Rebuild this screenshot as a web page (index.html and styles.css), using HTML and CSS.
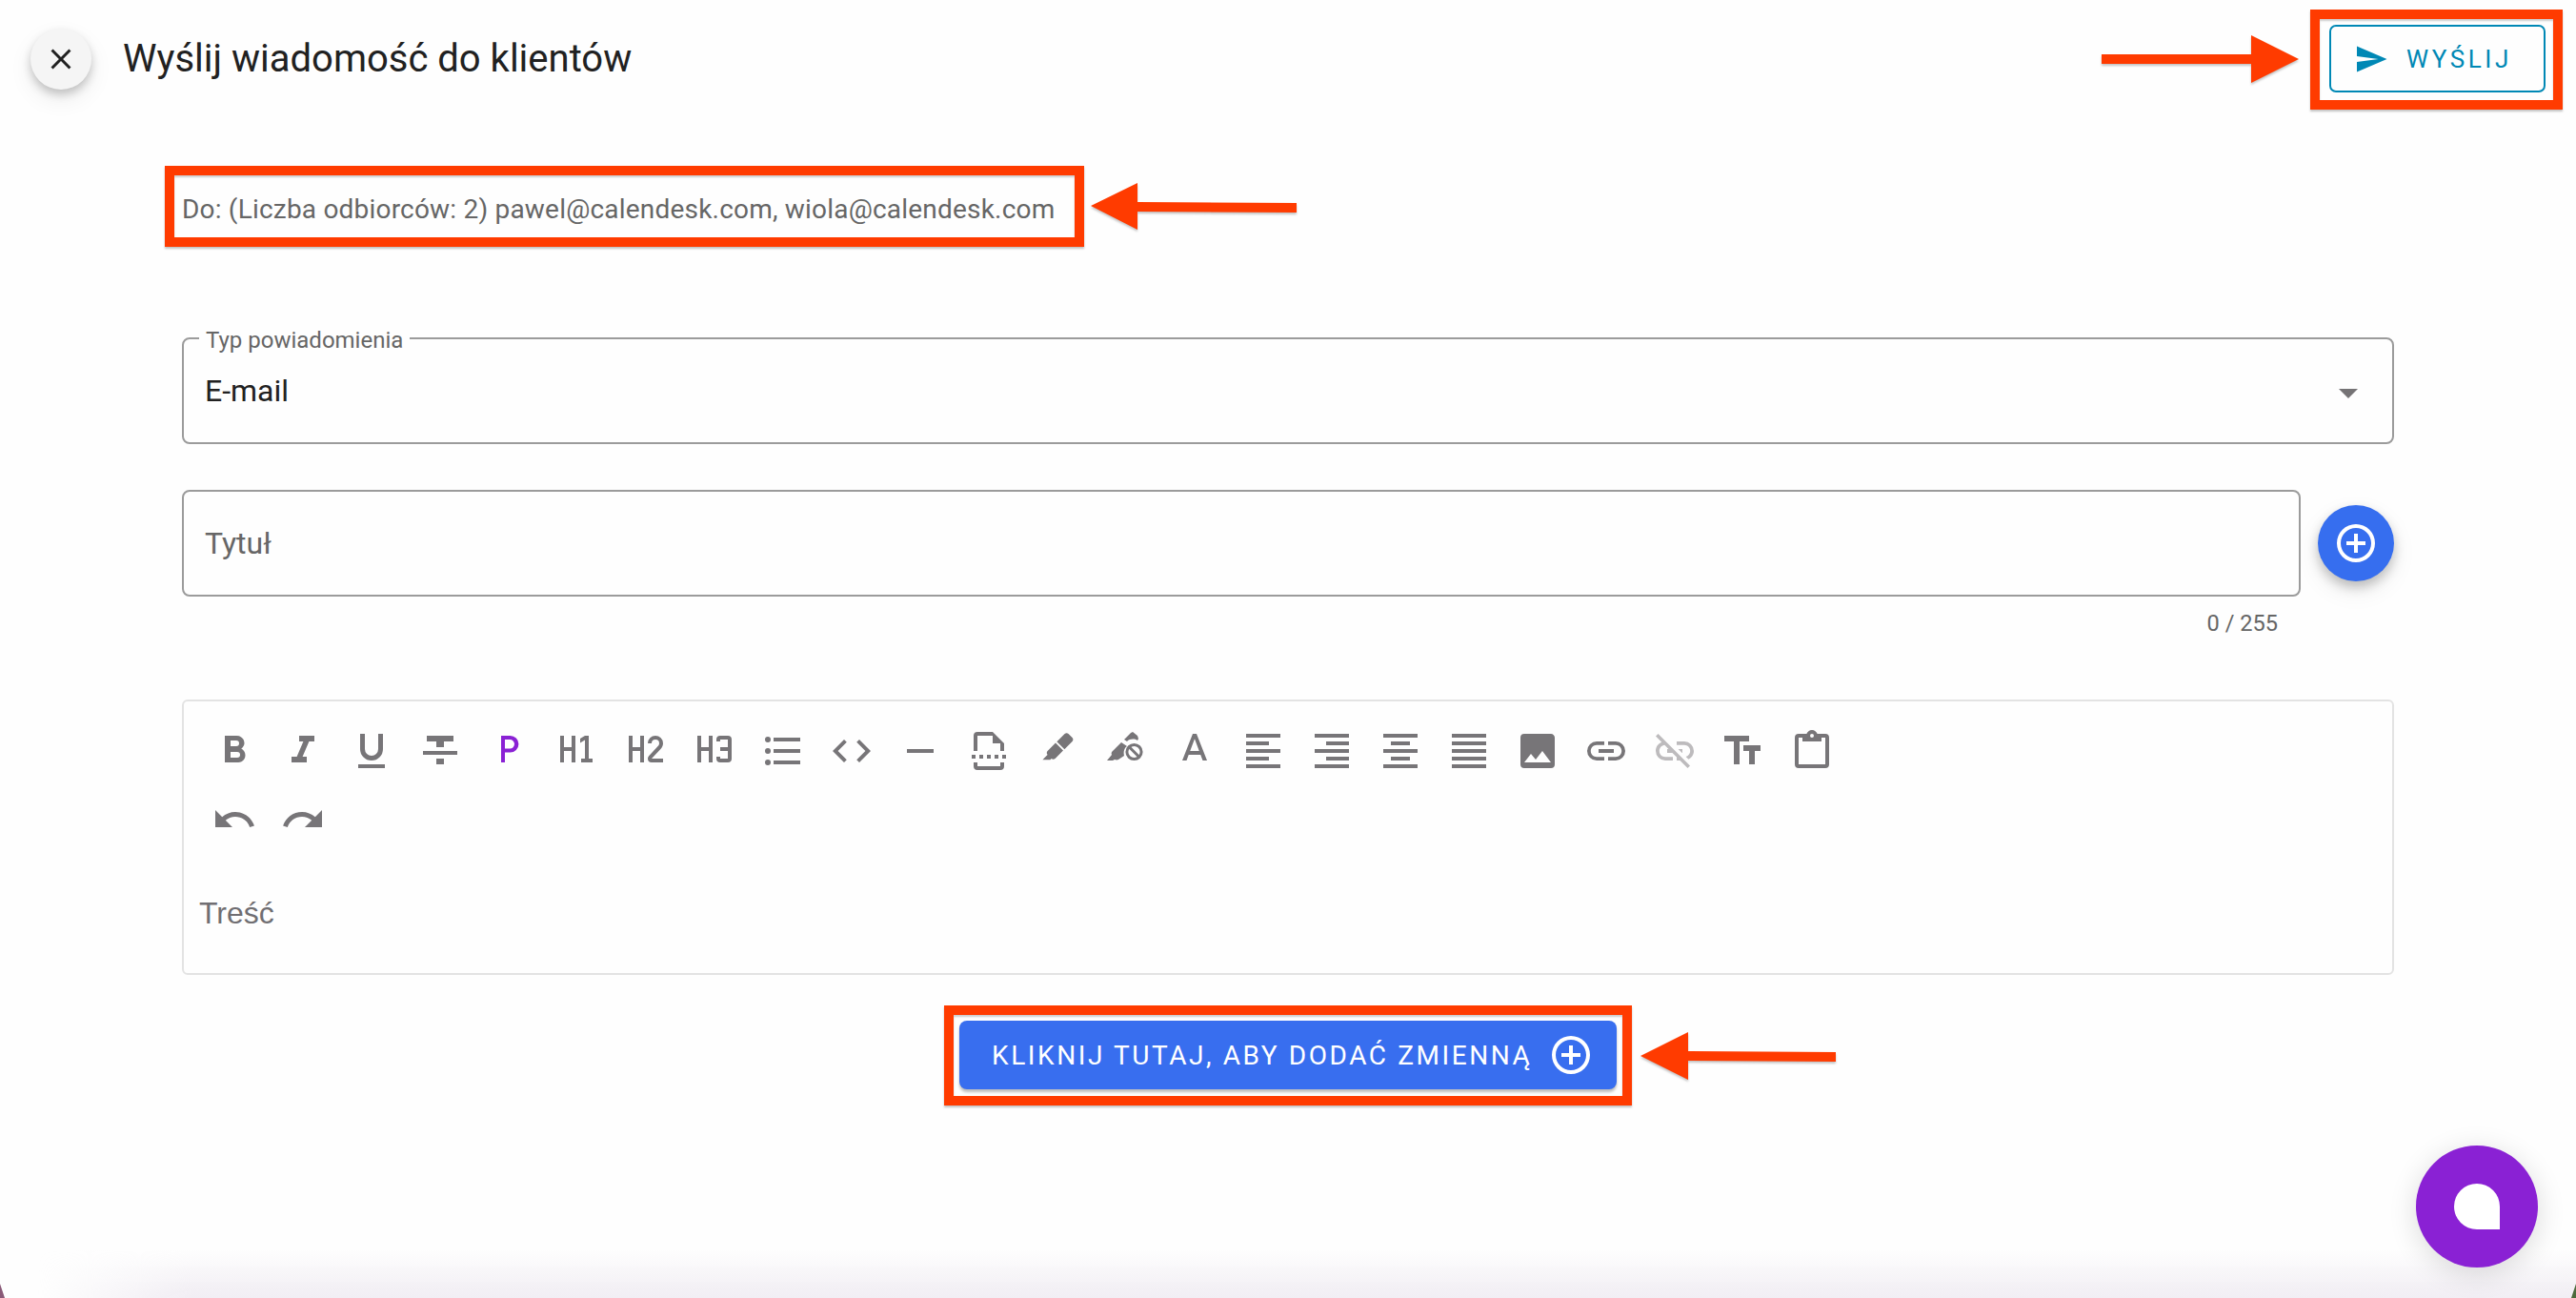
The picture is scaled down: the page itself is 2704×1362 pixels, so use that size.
FILE: index.html
```html
<!DOCTYPE html>
<html lang="pl">
<head>
<meta charset="utf-8">
<title>Wyślij wiadomość do klientów</title>
<link rel="stylesheet" href="styles.css">
</head>
<body>
<div class="page">
  <header class="topbar">
    <div class="topbar-left">
      <button class="close-btn" type="button"><svg class="ico-36" viewBox="0 0 24 24"><path d="M19,6.41L17.59,5L12,10.59L6.41,5L5,6.41L10.59,12L5,17.59L6.41,19L12,13.41L17.59,19L19,17.59L13.41,12L19,6.41Z"/></svg></button>
      <h1 class="title">Wyślij wiadomość do klientów</h1>
    </div>
    <div class="topbar-right">
      <svg class="arrow arrow-send" width="207" height="52" viewBox="0 0 207 52"><path d="M0 21H157V1L207 26L157 51V31H0Z"/></svg>
      <div class="hl hl-send">
        <button class="send-btn" type="button"><svg class="ico-36" viewBox="0 0 24 24"><path d="M2,21L23,12L2,3V10L17,12L2,14V21Z"/></svg><span>WYŚLIJ</span></button>
      </div>
    </div>
  </header>

  <main class="content">
    <div class="to-row">
      <div class="hl hl-to"><span class="to-text">Do: (Liczba odbiorców: 2) pawel@calendesk.com, wiola@calendesk.com</span></div>
      <svg class="arrow arrow-to" width="216" height="49" viewBox="0 0 216 49"><path d="M0 24L49 0V20L216 21V31L49 30V49Z"/></svg>
    </div>

    <div class="field field-select">
      <span class="field-label">Typ powiadomienia</span>
      <span class="field-value">E-mail</span>
      <span class="caret"></span>
    </div>

    <div class="title-row">
      <div class="title-col">
        <div class="field field-title"><span class="field-placeholder">Tytuł</span></div>
        <div class="counter">0 / 255</div>
      </div>
      <button class="fab-plus" type="button"><svg class="ico-48" viewBox="0 0 24 24"><path d="M12,20C7.59,20 4,16.41 4,12C4,7.59 7.59,4 12,4C16.41,4 20,7.59 20,12C20,16.41 16.41,20 12,20M12,2A10,10 0 0,0 2,12A10,10 0 0,0 12,22A10,10 0 0,0 22,12A10,10 0 0,0 12,2M13,7H11V11H7V13H11V17H13V13H17V11H13V7Z"/></svg></button>
    </div>

    <section class="editor">
      <div class="toolbar">
        <span class="tool"><svg viewBox="0 0 24 24"><path d="M13.5,15.5H10V12.5H13.5A1.5,1.5 0 0,1 15,14A1.5,1.5 0 0,1 13.5,15.5M10,6.5H13A1.5,1.5 0 0,1 14.5,8A1.5,1.5 0 0,1 13,9.5H10M15.6,10.79C16.57,10.11 17.25,9 17.25,8C17.25,5.74 15.5,4 13.25,4H7V18H14.04C16.14,18 17.75,16.3 17.75,14.21C17.75,12.69 16.89,11.39 15.6,10.79Z"/></svg></span>
        <span class="tool"><svg viewBox="0 0 24 24"><path d="M10,4V7H12.21L8.79,15H6V18H14V15H11.79L15.21,7H18V4H10Z"/></svg></span>
        <span class="tool"><svg viewBox="0 0 24 24"><path d="M5,21H19V19H5V21M12,17A6,6 0 0,0 18,11V3H15.5V11A3.5,3.5 0 0,1 12,14.5A3.5,3.5 0 0,1 8.5,11V3H6V11A6,6 0 0,0 12,17Z"/></svg></span>
        <span class="tool"><svg viewBox="0 0 24 24"><path d="M3,14H21V12H3M5,4V7H10V10H14V7H19V4M10,19H14V16H10V19Z"/></svg></span>
        <span class="tool tool-active"><svg viewBox="0 0 24 24"><path fill-rule="evenodd" d="M8,4H12.8A4.4,4.4 0 0,1 12.8,12.8H10V18H8ZM10,6V10.8H12.6A2.4,2.4 0 0,0 12.6,6Z"/></svg></span>
        <span class="tool"><svg viewBox="0 0 24 24"><path d="M3,4H5V10H9V4H11V18H9V12H5V18H3V4M14,18V16H16V6.31L13.5,7.75V5.44L16,4H18V16H20V18H14Z"/></svg></span>
        <span class="tool"><svg viewBox="0 0 24 24"><path d="M3,4H5V10H9V4H11V18H9V12H5V18H3V4M21,18H15A2,2 0 0,1 13,16C13,15.47 13.2,15 13.54,14.64L18.41,9.41C18.78,9.05 19,8.55 19,8A2,2 0 0,0 17,6A2,2 0 0,0 15,8H13A4,4 0 0,1 17,4A4,4 0 0,1 21,8C21,9.1 20.55,10.1 19.83,10.83L15,16H21V18Z"/></svg></span>
        <span class="tool"><svg viewBox="0 0 24 24"><path d="M3,4H5V10H9V4H11V18H9V12H5V18H3V4M15,4H19A2,2 0 0,1 21,6V16A2,2 0 0,1 19,18H15A2,2 0 0,1 13,16V15H15V16H19V12H15V10H19V6H15V7H13V6A2,2 0 0,1 15,4Z"/></svg></span>
        <span class="tool"><svg viewBox="0 0 24 24"><path d="M7,5H21V7H7V5M7,13V11H21V13H7M4,4.5A1.5,1.5 0 0,1 5.5,6A1.5,1.5 0 0,1 4,7.5A1.5,1.5 0 0,1 2.5,6A1.5,1.5 0 0,1 4,4.5M4,10.5A1.5,1.5 0 0,1 5.5,12A1.5,1.5 0 0,1 4,13.5A1.5,1.5 0 0,1 2.5,12A1.5,1.5 0 0,1 4,10.5M7,19V17H21V19H7M4,16.5A1.5,1.5 0 0,1 5.5,18A1.5,1.5 0 0,1 4,19.5A1.5,1.5 0 0,1 2.5,18A1.5,1.5 0 0,1 4,16.5Z"/></svg></span>
        <span class="tool"><svg viewBox="0 0 24 24"><path d="M14.6,16.6L19.2,12L14.6,7.4L16,6L22,12L16,18L14.6,16.6M9.4,16.6L4.8,12L9.4,7.4L8,6L2,12L8,18L9.4,16.6Z"/></svg></span>
        <span class="tool"><svg viewBox="0 0 24 24"><path d="M19,13H5V11H19V13Z"/></svg></span>
        <span class="tool"><svg viewBox="0 0 24 24"><path d="M18,20H6V18H4V20A2,2 0 0,0 6,22H18A2,2 0 0,0 20,20V18H18V20M14,2H6A2,2 0 0,0 4,4V12H6V4H14V8H18V12H20V8L14,2M11,16H13V14H11V16M7,16H9V14H7V16M15,16H17V14H15V16M3,16H5V14H3V16M19,16H21V14H19V16Z"/></svg></span>
        <span class="tool"><svg viewBox="-5.3 -2.5 34 34"><path d="M18.5,1.15C17.97,1.15 17.46,1.34 17.07,1.73L11.26,7.55L16.91,13.2L22.73,7.39C23.5,6.61 23.5,5.35 22.73,4.56L19.89,1.73C19.5,1.34 19,1.15 18.5,1.15M10.3,8.5L4.34,14.46C3.56,15.24 3.56,16.5 4.36,17.31C3.14,18.54 1.9,19.77 0.67,21H6.33L7.19,20.14C7.97,20.9 9.22,20.89 10,20.12L15.95,14.16L10.3,8.5Z"/></svg></span>
        <span class="tool"><svg viewBox="2 0 48 48"><path d="M6 34L11 28C10 26 11 25 12 24L21 15L27 19C24 21 23 25 24 29L18 33C16 34 15 33 14 33L12 34ZM24 12L31 5L33 4L38 8L39 11L38 13C35 11 30 11 27 14Z"/><circle class="stroke-only" cx="34.5" cy="25" r="7.6"/><path class="stroke-only" d="M29.5 20L39.5 30"/></svg></span>
        <span class="tool"><svg viewBox="0 0 24 24"><path d="M9.62,12L12,5.67L14.38,12M11,3L5.5,17H7.75L8.87,14H15.12L16.25,17H18.5L13,3H11Z"/></svg></span>
        <span class="tool"><svg viewBox="0 0 24 24"><path d="M3,3H21V5H3V3M3,7H15V9H3V7M3,11H21V13H3V11M3,15H15V17H3V15M3,19H21V21H3V19Z"/></svg></span>
        <span class="tool"><svg viewBox="0 0 24 24"><path d="M3,3H21V5H3V3M9,7H21V9H9V7M3,11H21V13H3V11M9,15H21V17H9V15M3,19H21V21H3V19Z"/></svg></span>
        <span class="tool"><svg viewBox="0 0 24 24"><path d="M3,3H21V5H3V3M7,7H17V9H7V7M3,11H21V13H3V11M7,15H17V17H7V15M3,19H21V21H3V19Z"/></svg></span>
        <span class="tool"><svg viewBox="0 0 24 24"><path d="M3,3H21V5H3V3M3,7H21V9H3V7M3,11H21V13H3V11M3,15H21V17H3V15M3,19H21V21H3V19Z"/></svg></span>
        <span class="tool"><svg viewBox="0 0 24 24"><path d="M8.5,13.5L11,16.5L14.5,12L19,18H5M21,19V5C21,3.89 20.1,3 19,3H5A2,2 0 0,0 3,5V19A2,2 0 0,0 5,21H19A2,2 0 0,0 21,19Z"/></svg></span>
        <span class="tool"><svg viewBox="0 0 24 24"><path d="M3.9,12C3.9,10.29 5.29,8.9 7,8.9H11V7H7A5,5 0 0,0 2,12A5,5 0 0,0 7,17H11V15.1H7C5.29,15.1 3.9,13.71 3.9,12M8,13H16V11H8V13M17,7H13V8.9H17C18.71,8.9 20.1,10.29 20.1,12C20.1,13.71 18.71,15.1 17,15.1H13V17H17A5,5 0 0,0 22,12A5,5 0 0,0 17,7Z"/></svg></span>
        <span class="tool tool-disabled"><svg viewBox="0 0 24 24"><path d="M17,7H13V8.9H17C18.71,8.9 20.1,10.29 20.1,12C20.1,13.43 19.12,14.63 17.79,15L19.19,16.4C20.88,15.55 22,13.91 22,12A5,5 0 0,0 17,7M16,11H13.81L15.81,13H16V11M2,4.27L5.11,7.38C3.29,8.12 2,9.91 2,12A5,5 0 0,0 7,17H11V15.1H7C5.29,15.1 3.9,13.71 3.9,12C3.9,10.41 5.11,9.1 6.66,8.93L8.73,11H8V13H10.73L13,15.27V17H14.73L18.74,21L20,19.74L3.27,3L2,4.27Z"/></svg></span>
        <span class="tool"><svg viewBox="0 0 24 24"><path d="M2,4V7H7V19H10V7H15V4H2M21,9H12V12H15V19H18V12H21V9Z"/></svg></span>
        <span class="tool"><svg viewBox="0 0 24 24"><path d="M19,3H14.82C14.4,1.84 13.3,1 12,1C10.7,1 9.6,1.84 9.18,3H5A2,2 0 0,0 3,5V19A2,2 0 0,0 5,21H19A2,2 0 0,0 21,19V5A2,2 0 0,0 19,3M12,3A1,1 0 0,1 13,4A1,1 0 0,1 12,5A1,1 0 0,1 11,4A1,1 0 0,1 12,3M7,7H17V5H19V19H5V5H7V7Z"/></svg></span>
        <span class="tool"><svg viewBox="0 0 24 24"><path d="M12.5,8C9.85,8 7.45,9 5.6,10.6L2,7V16H11L7.38,12.38C8.77,11.22 10.54,10.5 12.5,10.5C16.04,10.5 19.05,12.81 20.1,16L22.47,15.22C21.08,11.03 17.15,8 12.5,8Z"/></svg></span>
        <span class="tool"><svg viewBox="0 0 24 24"><path d="M18.4,10.6C16.55,9 14.15,8 11.5,8C6.85,8 2.92,11.03 1.54,15.22L3.9,16C4.95,12.81 7.95,10.5 11.5,10.5C13.45,10.5 15.23,11.22 16.62,12.38L13,16H22V7L18.4,10.6Z"/></svg></span>
      </div>
      <p class="editor-placeholder">Treść</p>
    </section>

    <div class="var-row">
      <div class="hl hl-var">
        <button class="var-btn" type="button"><span>KLIKNIJ TUTAJ, ABY DODAĆ ZMIENNĄ</span><svg class="ico-48" viewBox="0 0 24 24"><path d="M12,20C7.59,20 4,16.41 4,12C4,7.59 7.59,4 12,4C16.41,4 20,7.59 20,12C20,16.41 16.41,20 12,20M12,2A10,10 0 0,0 2,12A10,10 0 0,0 12,22A10,10 0 0,0 22,12A10,10 0 0,0 12,2M13,7H11V11H7V13H11V17H13V13H17V11H13V7Z"/></svg></button>
      </div>
      <svg class="arrow arrow-var" width="205" height="50" viewBox="0 0 205 50"><path d="M0 25L50 0V20L205 21V31L50 30V50Z"/></svg>
    </div>
  </main>

  <button class="chat-btn" type="button"><span class="chat-bubble"></span></button>
  <div class="bottom-fade"></div>
  <span class="corner corner-left"></span>
  <span class="corner corner-right"></span>
</div>
</body>
</html>
```
FILE: styles.css
```css
* { box-sizing: border-box; }
html, body { margin: 0; padding: 0; }
body { background: #fefefe; font-family: Roboto, "Liberation Sans", sans-serif; overflow: hidden; }
button { font-family: inherit; cursor: pointer; padding: 0; }
svg path { fill: currentColor; }
svg .stroke-only { fill: none; stroke: currentColor; stroke-width: 3; }
.page { position: relative; width: 2704px; height: 1362px; overflow: hidden; }

.ico-36 { width: 36px; height: 36px; display: block; flex: none; }
.ico-48 { width: 48px; height: 48px; display: block; flex: none; }
.arrow { display: block; flex: none; color: #ff3b00; filter: drop-shadow(0 2px 1px rgba(60,60,60,.3)); }

.hl { border: 10px solid #ff3b00; box-shadow: 0 2px 2px rgba(60,60,60,.3), inset 0 2px 2px rgba(60,60,60,.25); flex: none; }

.topbar { display: flex; justify-content: space-between; height: 125px; padding: 10px 14px 0 32px; }
.topbar-left { display: flex; align-items: flex-start; padding-top: 20px; }
.close-btn { width: 64px; height: 64px; border: 0; border-radius: 50%; background: #f5f5f5; color: #212121; display: flex; align-items: center; justify-content: center; box-shadow: 0 5px 10px rgba(0,0,0,.2), 0 10px 24px rgba(0,0,0,.08); }
.title { margin: 0 0 0 33px; font-size: 40px; font-weight: 400; line-height: 64px; color: #212121; }
.topbar-right { display: flex; align-items: flex-start; }
.arrow-send { margin: 26px 12px 0 0; }
.hl-send { width: 265px; height: 105px; padding: 6px 0 0 10px; }
.send-btn { width: 227px; height: 71px; background: transparent; border: 2px solid #0088b5; border-radius: 7px; color: #0088b5; display: flex; align-items: center; gap: 19px; padding-left: 24px; font-size: 26px; font-weight: 400; letter-spacing: 3.6px; }

.content { padding: 49px 191px 0; }
.to-row { display: flex; align-items: center; gap: 7px; margin-left: -18px; }
.hl-to { width: 965px; height: 85px; padding: 6px 0 0 8px; display: flex; align-items: center; }
.to-text { font-size: 28px; letter-spacing: .2px; color: #666; white-space: nowrap; }

.field { position: relative; border: 2px solid #9b9b9b; border-radius: 8px; height: 112px; display: flex; align-items: center; padding: 0 22px; }
.field-select { margin-top: 95px; }
.field-label { position: absolute; left: 16px; top: -11px; background: #fefefe; padding: 0 7px; font-size: 24px; line-height: 24px; color: #666; }
.field-value { font-size: 32px; color: #212121; }
.field-placeholder { font-size: 32px; color: #666; }
.caret { position: absolute; right: 36px; top: 52px; border-left: 10px solid transparent; border-right: 10px solid transparent; border-top: 10px solid #757375; }

.title-row { display: flex; align-items: flex-start; gap: 18px; margin-top: 48px; }
.title-col { flex: 1; }
.counter { text-align: right; padding-right: 24px; font-size: 23.6px; line-height: 26px; margin-top: 15px; color: #666; }
.fab-plus { flex: none; width: 80px; height: 80px; margin-top: 16px; border: 0; border-radius: 50%; background: #366eef; color: #fff; display: flex; align-items: center; justify-content: center; box-shadow: 0 6px 12px rgba(0,0,0,.22), 0 10px 26px rgba(0,0,0,.08); }

.editor { margin-top: 67px; height: 289px; border: 2px solid #e3e3e3; border-radius: 6px; padding: 16px 17px 0; }
.toolbar { display: flex; flex-wrap: wrap; width: 1728px; }
.tool { width: 72px; height: 72px; display: flex; align-items: center; justify-content: center; color: #777578; }
.tool svg { width: 48px; height: 48px; display: block; }
.tool-active { color: #8a21d4; }
.tool-disabled { color: #bdbbbd; }
.editor-placeholder { margin: 42px 0 0 -1px; font-family: "Liberation Sans", Arial, sans-serif; font-size: 32px; line-height: 40px; color: #706e72; }

.var-row { position: relative; display: flex; justify-content: center; margin-top: 32px; }
.hl-var { width: 722px; height: 105px; padding: 6px; }
.arrow-var { position: absolute; left: 1531px; top: 28px; }
.var-btn { width: 690px; height: 72px; border: 0; border-radius: 8px; background: #386eef; color: #fff; display: flex; align-items: center; justify-content: space-between; padding: 0 24px 0 34px; font-size: 28px; font-weight: 400; letter-spacing: 2.58px; white-space: nowrap; box-shadow: 0 3px 3px rgba(0,0,0,.25); }

.chat-btn { position: absolute; left: 2536px; top: 1202px; width: 128px; height: 128px; border: 0; border-radius: 50%; background: #8a21d4; display: flex; align-items: center; justify-content: center; box-shadow: 0 6px 30px rgba(0,0,0,.14); z-index: 2; }
.chat-bubble { width: 48px; height: 48px; background: #fff; border-radius: 50% 50% 0 50%; display: block; }
.bottom-fade { position: absolute; left: 0; right: 0; bottom: 0; height: 50px; background: linear-gradient(to bottom, rgba(232,226,236,0), rgba(232,226,236,.6)); -webkit-mask-image: linear-gradient(to right, transparent 40px, #000 200px, #000 calc(100% - 200px), #ccc 100%); mask-image: linear-gradient(to right, transparent 40px, #000 200px, #000 calc(100% - 200px), #ccc 100%); }
.corner { position: absolute; bottom: 0; width: 5px; height: 15px; }
.corner-left { left: 0; background: #8a5a78; clip-path: polygon(0 0, 100% 100%, 0 100%); }
.corner-right { right: 0; background: #4d6a3c; clip-path: polygon(100% 0, 100% 100%, 0 100%); }
```
